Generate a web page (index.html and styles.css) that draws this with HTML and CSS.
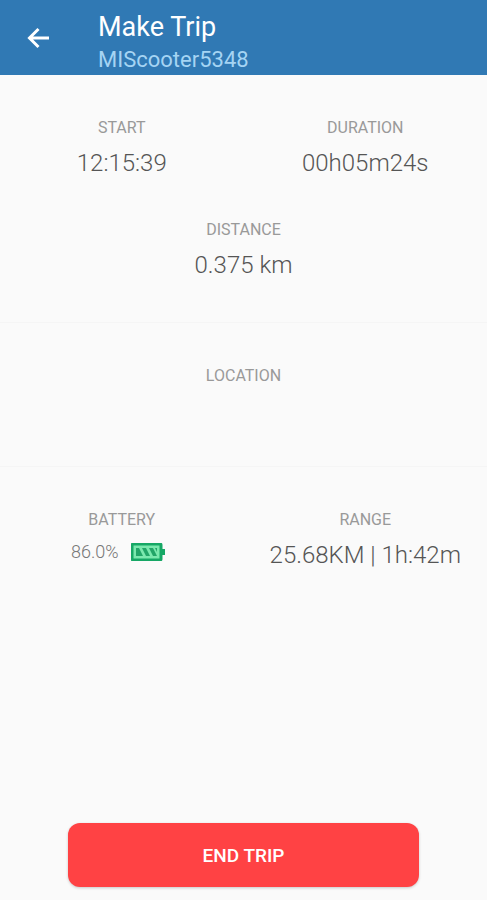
FILE: index.html
```html
<!DOCTYPE html>
<html lang="en">
<head>
    <meta charset="UTF-8">
    <meta name="viewport" content="width=device-width, initial-scale=1.0">
    <title>Make Trip</title>
    <link rel="stylesheet" href="styles.css">
</head>
<body>
    <header class="app-bar">
        <button type="button" class="back-button" aria-label="Back">
            <svg width="24" height="24" viewBox="0 0 24 24" fill="none" stroke="currentColor" stroke-width="3">
                <path d="M23 12H4M12.500 3L3.500 12l9 9"/>
            </svg>
        </button>
        <div class="app-title">
            <h1>Make Trip</h1>
            <p>MIScooter5348</p>
        </div>
    </header>

    <main class="trip">
        <section class="panel">
            <div class="stat">
                <h2>START</h2>
                <p class="value">12:15:39</p>
            </div>
            <div class="stat">
                <h2>DURATION</h2>
                <p class="value">00h05m24s</p>
            </div>
            <div class="stat wide">
                <h2>DISTANCE</h2>
                <p class="value">0.375 km</p>
            </div>
        </section>

        <section class="panel location">
            <div class="stat wide">
                <h2>LOCATION</h2>
            </div>
        </section>

        <section class="panel">
            <div class="stat">
                <h2>BATTERY</h2>
                <p class="battery">
                    <span>86.0%</span>
                    <svg width="34" height="18" viewBox="0 0 34 18" aria-hidden="true">
                        <rect x="1" y="1" width="29" height="16" rx="1" fill="#7be8ae" stroke="#16a765" stroke-width="3"/>
                        <path d="M31 6h3v6h-3z" fill="#16a765"/>
                        <path d="M5 5h3l4 8H5zM11 5h4l4 8h-4zM18 5h4l4 8h-4zM24 5h2v4z" fill="#22a568"/>
                    </svg>
                </p>
            </div>
            <div class="stat">
                <h2>RANGE</h2>
                <p class="value">25.68KM | 1h:42m</p>
            </div>
        </section>
    </main>

    <footer class="actions">
        <button type="button" class="end-button">END TRIP</button>
    </footer>
</body>
</html>
```
FILE: styles.css
```css
* {
    box-sizing: border-box;
}

body {
    font-family: Roboto, 'Liberation Sans', sans-serif;
    background-color: #fafafa;
    color: #555;
    margin: 0;
    min-height: 100vh;
    display: flex;
    flex-direction: column;
}

h1, h2, p {
    margin: 0;
    font-weight: normal;
}

.app-bar {
    display: flex;
    align-items: center;
    gap: 48px;
    padding: 8px 26px 0;
    height: 75px;
    background-color: #3079b4;
    color: white;
}

.back-button {
    display: flex;
    padding: 0;
    margin-bottom: 8px;
    border: none;
    background: none;
    color: inherit;
    cursor: pointer;
}

.app-title h1 {
    font-size: 27px;
    line-height: 36px;
}

.app-title p {
    font-size: 22px;
    line-height: 30px;
    color: #a5d4f3;
}

.panel {
    display: grid;
    grid-template-columns: 1fr 1fr;
    row-gap: 42px;
    padding: 43px 0 42px;
    text-align: center;
}

.panel + .panel {
    border-top: 1px solid #f5f5f5;
}

.location {
    min-height: 144px;
}

.wide {
    grid-column: 1 / -1;
}

.stat h2 {
    font-size: 16px;
    line-height: 20px;
    color: #999;
}

.value {
    margin-top: 10px;
    font-size: 24px;
    font-weight: 300;
    line-height: 30px;
    white-space: nowrap;
}

.battery {
    display: flex;
    align-items: center;
    justify-content: center;
    gap: 12px;
    margin-top: 10px;
    padding-right: 8px;
    font-size: 18px;
    font-weight: 300;
    line-height: 24px;
    color: #777;
}

.actions {
    display: flex;
    justify-content: center;
    margin-top: auto;
    padding-bottom: 13px;
}

.end-button {
    width: 72%;
    height: 64px;
    border: none;
    border-radius: 12px;
    background-color: #ff4244;
    box-shadow: 0 1px 3px rgba(0, 0, 0, 0.2);
    color: white;
    font-family: inherit;
    font-size: 19px;
    font-weight: 500;
    cursor: pointer;
}
```
